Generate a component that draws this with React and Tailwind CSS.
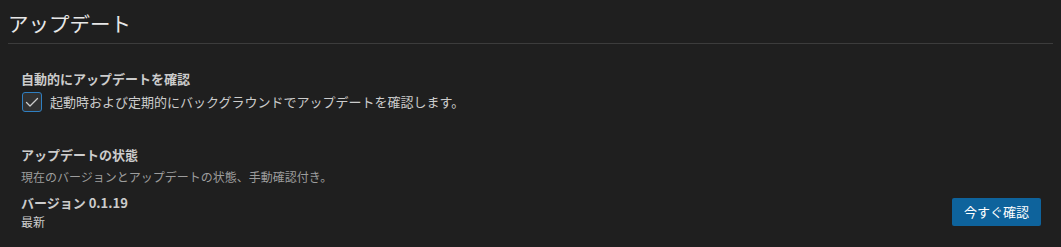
export default function App() {
  const font = { fontFamily: '"Noto Sans CJK JP", "Noto Sans", sans-serif' };
  return (
    <div className="w-[1061px] h-[247px] bg-[#1f1f1f] text-[#cccccc] overflow-hidden" style={font}>
      <div className="mx-[8px] pt-[9px] pb-[6px] border-b border-[#3c3c3c]">
        <div className="text-[20.5px] leading-[28px] text-[#e7e7e7]">アップデート</div>
      </div>
      <div className="pl-[21px] pr-[20px]">
        <div className="mt-[26px] text-[13px] leading-[18px] font-bold text-[#cccccc]">自動的にアップデートを確認</div>
        <div className="mt-[4px] flex items-center h-[20px]">
          <div className="ml-[1px] w-[20px] h-[20px] rounded-[3px] border border-[#2f7fc1] bg-[#313131] flex items-center justify-center">
            <svg width="16" height="16" viewBox="0 0 16 16" fill="none">
              <path d="M2.5 8.5 L6 12 L13.5 4.5" stroke="#cccccc" strokeWidth="1.3" strokeLinecap="round" strokeLinejoin="round" />
            </svg>
          </div>
          <span className="ml-[8px] text-[13px] leading-[18px]">起動時および定期的にバックグラウンドでアップデートを確認します。</span>
        </div>
        <div className="mt-[34px] text-[13px] leading-[18px] font-bold">アップデートの状態</div>
        <div className="mt-[4px] text-[12px] leading-[18px] text-[#9d9d9d]">現在のバージョンとアップデートの状態、手動確認付き。</div>
        <div className="mt-[8px] flex items-center justify-between">
          <div>
            <div className="text-[13px] leading-[18px] font-bold">バージョン 0.1.19</div>
            <div className="mt-[2px] text-[12px] leading-[16px]">最新</div>
          </div>
          <button className="h-[28px] w-[89px] flex items-center justify-center rounded-[2px] bg-[#0e639c] text-white text-[13px] leading-[18px]">今すぐ確認</button>
        </div>
      </div>
    </div>
  );
}
